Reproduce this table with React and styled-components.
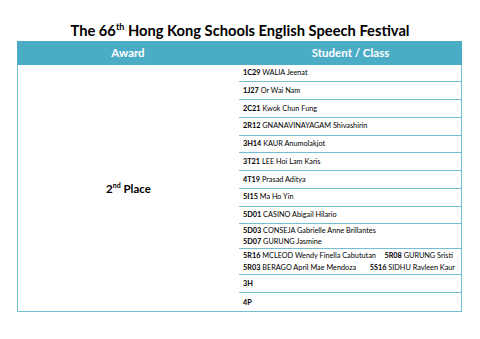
import React from 'react';
import styled, { createGlobalStyle } from 'styled-components';

const GlobalStyle = createGlobalStyle`
  html, body {
    margin: 0;
    padding: 0;
    background: #ffffff;
  }
  body {
    font-family: 'Lato', 'Open Sans', sans-serif;
    color: #000;
  }
`;

const ACCENT = '#4bacc6';
const LINE = '#74bfd4';

const Page = styled.div`
  width: 480px;
  height: 339px;
  padding-top: 19px;
  box-sizing: border-box;
  overflow: hidden;
`;

const Title = styled.h1`
  margin: 0;
  height: 22px;
  font-size: 14.7px;
  line-height: 23px;
  font-weight: 700;
  text-align: center;

  sup {
    font-size: 9px;
    line-height: 0;
    vertical-align: 6px;
  }
`;

const Table = styled.div`
  margin-left: 17px;
  width: 445px;
  box-sizing: border-box;
  border-left: 1px solid ${LINE};
  border-right: 1px solid ${LINE};
  border-bottom: 1px solid ${LINE};
`;

const Header = styled.div`
  display: grid;
  grid-template-columns: 222px 1fr;
  height: 23.5px;
  margin: 0 -1px;
  background: ${ACCENT};
  color: #fff;
  font-size: 11.5px;
  font-weight: 700;
`;

const HeadCell = styled.div`
  display: flex;
  align-items: center;
  justify-content: center;
`;

const Body = styled.div`
  display: flex;
`;

const AwardCell = styled.div`
  width: 221px;
  flex: none;
  display: flex;
  align-items: center;
  justify-content: center;
  font-size: 11.5px;
  font-weight: 700;
  padding-top: 2px;

  sup {
    font-size: 7px;
    line-height: 0;
    vertical-align: 5px;
  }
`;

const List = styled.div`
  flex: 1;
  min-width: 0;
  display: flex;
  flex-direction: column;
`;

const Row = styled.div`
  box-sizing: border-box;
  height: ${(p) => p.$h || 17.78}px;
  border-bottom: ${(p) => (p.$last ? 'none' : `1px solid ${LINE}`)};
  padding: 0 6px 0 4px;
  display: flex;
  flex-direction: column;
  justify-content: center;
  font-size: 7.3px;
  line-height: 11.5px;
`;

const PairLine = styled.div`
  display: flex;
  justify-content: space-between;
  padding-right: ${(p) => (p.$inset ? '2px' : '0')};
`;

const Entry = styled.span`
  white-space: nowrap;

  b {
    font-weight: 700;
  }
`;

const Student = ({ code, name }) => (
  <Entry>
    <b>{code}</b>
    {name ? ` ${name}` : ''}
  </Entry>
);

const singles = [
  ['1C29', 'WALIA Jeenat'],
  ['1J27', 'Or Wai Nam'],
  ['2C21', 'Kwok Chun Fung'],
  ['2R12', 'GNANAVINAYAGAM Shivashirin'],
  ['3H14', 'KAUR Anumolakjot'],
  ['3T21', 'LEE Hoi Lam Karis'],
  ['4T19', 'Prasad Aditya'],
  ['5I15', 'Ma Ho Yin'],
  ['5D01', 'CASINO Abigail Hilario'],
];

const App = () => {
  return (
    <Page>
      <GlobalStyle />
      <Title>
        The 66<sup>th</sup> Hong Kong Schools English Speech Festival
      </Title>
      <Table>
        <Header>
          <HeadCell>Award</HeadCell>
          <HeadCell>Student / Class</HeadCell>
        </Header>
        <Body>
          <AwardCell>
            <span>
              2<sup>nd</sup> Place
            </span>
          </AwardCell>
          <List>
            {singles.map(([code, name]) => (
              <Row key={code}>
                <Student code={code} name={name} />
              </Row>
            ))}
            <Row $h={25}>
              <Student code="5D03" name="CONSEJA Gabrielle Anne Brillantes" />
              <Student code="5D07" name="GURUNG Jasmine" />
            </Row>
            <Row $h={26}>
              <PairLine $inset>
                <Student code="5R16" name="MCLEOD Wendy Finella Cabututan" />
                <Student code="5R08" name="GURUNG Sristi" />
              </PairLine>
              <PairLine>
                <Student code="5R03" name="BERAGO April Mae Mendoza" />
                <Student code="5S16" name="SIDHU Ravleen Kaur" />
              </PairLine>
            </Row>
            <Row $h={18}>
              <Student code="3H" />
            </Row>
            <Row $h={18} $last>
              <Student code="4P" />
            </Row>
          </List>
        </Body>
      </Table>
    </Page>
  );
};

export default App;
